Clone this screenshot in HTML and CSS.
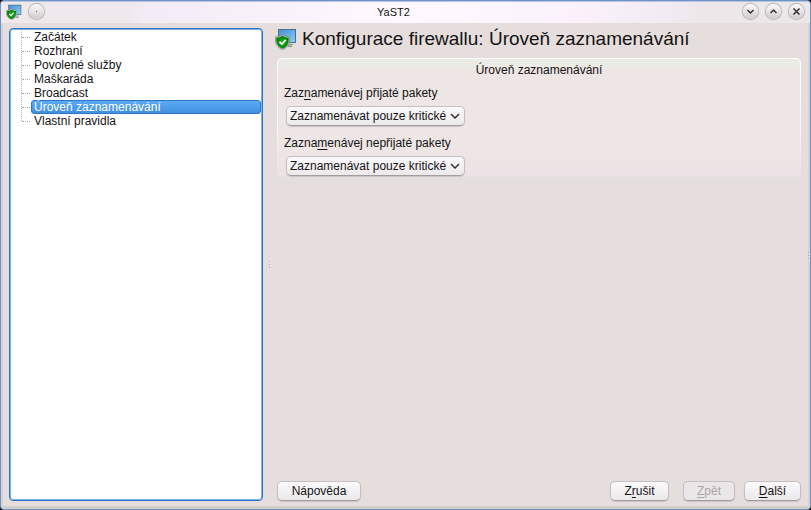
FILE: index.html
```html
<!DOCTYPE html>
<html lang="cs">
<head>
    <meta charset="UTF-8">
    <meta name="viewport" content="width=device-width, initial-scale=1.0">
    <title>YaST2</title>
    <link rel="stylesheet" href="styles.css">
</head>
<body>
    <svg class="symbols" aria-hidden="true">
        <defs>
            <linearGradient id="screen" x1="0" y1="0" x2="1" y2="1">
                <stop offset="0" stop-color="#4692d2"/>
                <stop offset="1" stop-color="#8acbf8"/>
            </linearGradient>
            <radialGradient id="green">
                <stop offset="0" stop-color="#22bd22"/>
                <stop offset="1" stop-color="#007a08"/>
            </radialGradient>
        </defs>
        <symbol id="firewall" viewBox="0 0 22 22">
            <path d="M9 17h7l2 2H9z" fill="#c4c0c2"/>
            <path d="M13 18.500h4M14 16.500h4" stroke="#8b898b" stroke-width="1"/>
            <rect x="3" y="1" width="18" height="14" fill="#4c6f8c"/>
            <rect x="4" y="2" width="16" height="12" fill="url(#screen)"/>
            <path d="M7.500 6.500Q10 8.500 14.800 9L14.500 14Q13.500 19 7.500 21.700Q1.500 19 .5 14L.2 9Q5 8.500 7.500 6.500z" fill="#b9c2ba" stroke="#6f7a70" stroke-width=".6"/>
            <path d="M7.500 7.800Q10 9.700 13.700 10L13.500 14Q12.500 18.500 7.500 20.600Q2.500 18.500 1.500 14L1.300 10Q5 9.700 7.500 7.800z" fill="url(#green)"/>
            <path d="M4.500 13.800l2.300 2.300 4-4.200" fill="none" stroke="#fff" stroke-width="1.700"/>
        </symbol>
    </svg>
    <div class="window">
        <header class="titlebar">
            <div class="title-left">
                <svg class="app-icon"><use href="#firewall"/></svg>
                <button class="round" aria-label="Na všechny plochy"><svg viewBox="0 0 15 15"><path d="M7 7h1v1H7z" fill="#555" stroke="none"/></svg></button>
            </div>
            <div class="title">YaST2</div>
            <div class="title-right">
                <button class="round" aria-label="Minimalizovat"><svg viewBox="0 0 15 15"><path d="M4.500 6l3 3 3-3"/></svg></button>
                <button class="round" aria-label="Maximalizovat"><svg viewBox="0 0 15 15"><path d="M4.500 9l3-3 3 3"/></svg></button>
                <button class="round" aria-label="Zavřít"><svg viewBox="0 0 15 15"><path d="M4.500 4.500l6 6M10.500 4.500l-6 6"/></svg></button>
            </div>
        </header>
        <div class="content">
            <nav class="tree">
                <ul>
                    <li><a href="#">Začátek</a></li>
                    <li><a href="#">Rozhraní</a></li>
                    <li><a href="#">Povolené služby</a></li>
                    <li><a href="#">Maškaráda</a></li>
                    <li><a href="#">Broadcast</a></li>
                    <li><a href="#" class="selected" aria-current="page">Úroveň zaznamenávání</a></li>
                    <li><a href="#">Vlastní pravidla</a></li>
                </ul>
            </nav>
            <div class="splitter"><i></i><i></i><i></i></div>
            <main class="main">
                <h1 class="heading"><svg class="heading-icon"><use href="#firewall"/></svg>Konfigurace firewallu: Úroveň zaznamenávání</h1>
                <section class="group">
                    <h2 class="group-title">Úroveň zaznamenávání</h2>
                    <div class="field">
                        <label for="accepted">Zaz<u>n</u>amenávej přijaté pakety</label>
                        <div class="combo">
                            <select id="accepted">
                                <option>Zaznamenávat pouze kritické</option>
                            </select>
                            <svg viewBox="0 0 10 6"><path d="M1 1l4 4 4-4"/></svg>
                        </div>
                    </div>
                    <div class="field">
                        <label for="rejected">Zazna<u>m</u>enávej nepřijaté pakety</label>
                        <div class="combo">
                            <select id="rejected">
                                <option>Zaznamenávat pouze kritické</option>
                            </select>
                            <svg viewBox="0 0 10 6"><path d="M1 1l4 4 4-4"/></svg>
                        </div>
                    </div>
                </section>
                <footer class="buttons">
                    <button class="btn help">Nápověda</button>
                    <button class="btn cancel">Z<u>r</u>ušit</button>
                    <button class="btn back" disabled><u>Z</u>pět</button>
                    <button class="btn next"><u>D</u>alší</button>
                </footer>
            </main>
            <div class="splitter edge"><i></i><i></i><i></i></div>
        </div>
    </div>
</body>
</html>
```
FILE: styles.css
```css
* {
    box-sizing: border-box;
}

body {
    margin: 0;
    background: #000;
    color: #141414;
    font-family: "Liberation Sans", Arial, sans-serif;
    font-size: 12px;
    line-height: 14px;
}

.symbols {
    position: absolute;
    width: 0;
    height: 0;
}

.window {
    display: flex;
    flex-direction: column;
    min-height: 100vh;
    border: 1px solid #6d93c8;
    border-radius: 4px;
    background: #e6dddd;
    box-shadow: inset 2px 0 #d6d3d5, inset -2px 0 #d6d3d5, inset 0 -3px #d2cfc9;
}

.titlebar {
    display: flex;
    align-items: center;
    height: 22px;
    padding: 0 6px 2px 5px;
    border-top: 1px solid #b4c5e2;
    border-radius: 3px 3px 0 0;
    background: linear-gradient(105deg, #efe9ec 0%, #efe9ee 16%, #f3ebf5 18%, #faf2fb 35%, #fff9ff 50%, #fbf2fc 70%, #f2eaf3 83%, #ede7ea 86%, #ece7e9 100%);
}

.title {
    flex: 1;
    font-size: 11px;
    text-align: center;
}

.title-left,
.title-right {
    display: flex;
    align-items: center;
    gap: 8px;
}

.app-icon {
    width: 16px;
    height: 16px;
}

.title-left {
    gap: 7px;
}

.round {
    width: 15px;
    height: 15px;
    padding: 0;
    border: 0;
    border-radius: 50%;
    background: linear-gradient(#fbfafb, #cfcccd);
    box-shadow: 0 0 1px 1px #b5b1b3;
}

.round svg {
    display: block;
    width: 15px;
    height: 15px;
    fill: none;
    stroke: #303030;
    stroke-width: 1.5;
}

.content {
    display: flex;
    flex: 1;
    padding: 5px 1px 8px 8px;
}

.tree {
    flex: 0 0 254px;
    padding: 0 1px;
    border: 1px solid #2a74cc;
    border-radius: 4px;
    background: #fff;
    box-shadow: inset 0 0 0 1px #86aede;
}

.tree ul {
    margin: 0;
    padding: 1px 0 0 10px;
    list-style: none;
}

.tree li {
    display: flex;
    background: repeating-linear-gradient(#b5b5b5 0 1px, transparent 1px 2px) 0 0 / 1px 100% no-repeat;
}

.tree li::before {
    content: "";
    width: 8px;
    height: 7px;
    margin: 0 1px;
    border-bottom: 1px dotted #aaa;
}

.tree li:last-child {
    background-size: 1px 8px;
}

.tree a {
    flex: 1;
    padding: 0 2px;
    border: 1px solid transparent;
    border-radius: 3px;
    color: inherit;
    line-height: 12px;
    text-decoration: none;
}

.tree .selected {
    border-color: #2e75c4;
    background: linear-gradient(#5aaaf8, #4190dd);
    color: #fff;
}

.splitter {
    display: flex;
    flex: 0 0 12px;
    flex-direction: column;
    align-items: center;
    justify-content: center;
    gap: 2px;
}

.splitter i {
    width: 1px;
    height: 1px;
    background: #aaa;
    box-shadow: 1px 1px #f5f0f0;
}

.edge {
    flex-basis: 5px;
    align-items: flex-end;
    padding-bottom: 18px;
}

.main {
    display: flex;
    flex: 1;
    flex-direction: column;
}

.heading {
    display: flex;
    align-items: center;
    gap: 5px;
    height: 22px;
    margin: 0;
    font-size: 19px;
    font-weight: normal;
    line-height: 22px;
}

.heading-icon {
    width: 22px;
    height: 22px;
}

.group {
    margin: 8px 3px 0 2px;
    padding: 4px 6px 9px;
    border: 1px solid transparent;
    border-radius: 5px;
    background:
        linear-gradient(#ecebe5 9px, #eee6e5 9px, #eee5e5 70%, #ede2e5 117px, #e4e0dc 118px, #e6dddd) padding-box,
        linear-gradient(#fff, #f8f4f4 60%, #e6dddd) border-box;
}

.group-title {
    margin: 0 0 9px;
    font-size: 12px;
    font-weight: normal;
    text-align: center;
}

.field + .field {
    margin-top: 10px;
}

.field label {
    display: block;
    margin-bottom: 6px;
}

u {
    text-decoration: underline;
    text-decoration-thickness: 1px;
    text-underline-offset: 2px;
    text-decoration-skip-ink: none;
}

.combo {
    position: relative;
    width: max-content;
    margin-left: 2px;
}

.combo select,
.btn {
    height: 20px;
    border: 1px solid #c5bfc1;
    border-bottom-color: #a29c9f;
    border-radius: 5px;
    background: linear-gradient(#fbf9fb, #ece9eb);
    box-shadow: 0 1px 1px #cbc4c5;
    color: inherit;
    font: inherit;
}

.combo select {
    display: block;
    width: 179px;
    padding: 0 16px 0 3px;
    appearance: none;
}

.combo svg {
    position: absolute;
    top: 7px;
    right: 5px;
    width: 10px;
    height: 6px;
    fill: none;
    stroke: #333;
    stroke-width: 1.5;
    pointer-events: none;
}

.buttons {
    display: flex;
    margin: auto 3px 0 2px;
}

.btn {
    padding: 0;
}

.help {
    width: 84px;
    margin-right: auto;
}

.cancel {
    width: 59px;
    margin-right: 14px;
}

.back {
    width: 52px;
    margin-right: 9px;
}

.next {
    width: 57px;
}

.btn:disabled {
    background: #ebe6e8;
    color: #aaa5a7;
}
```
